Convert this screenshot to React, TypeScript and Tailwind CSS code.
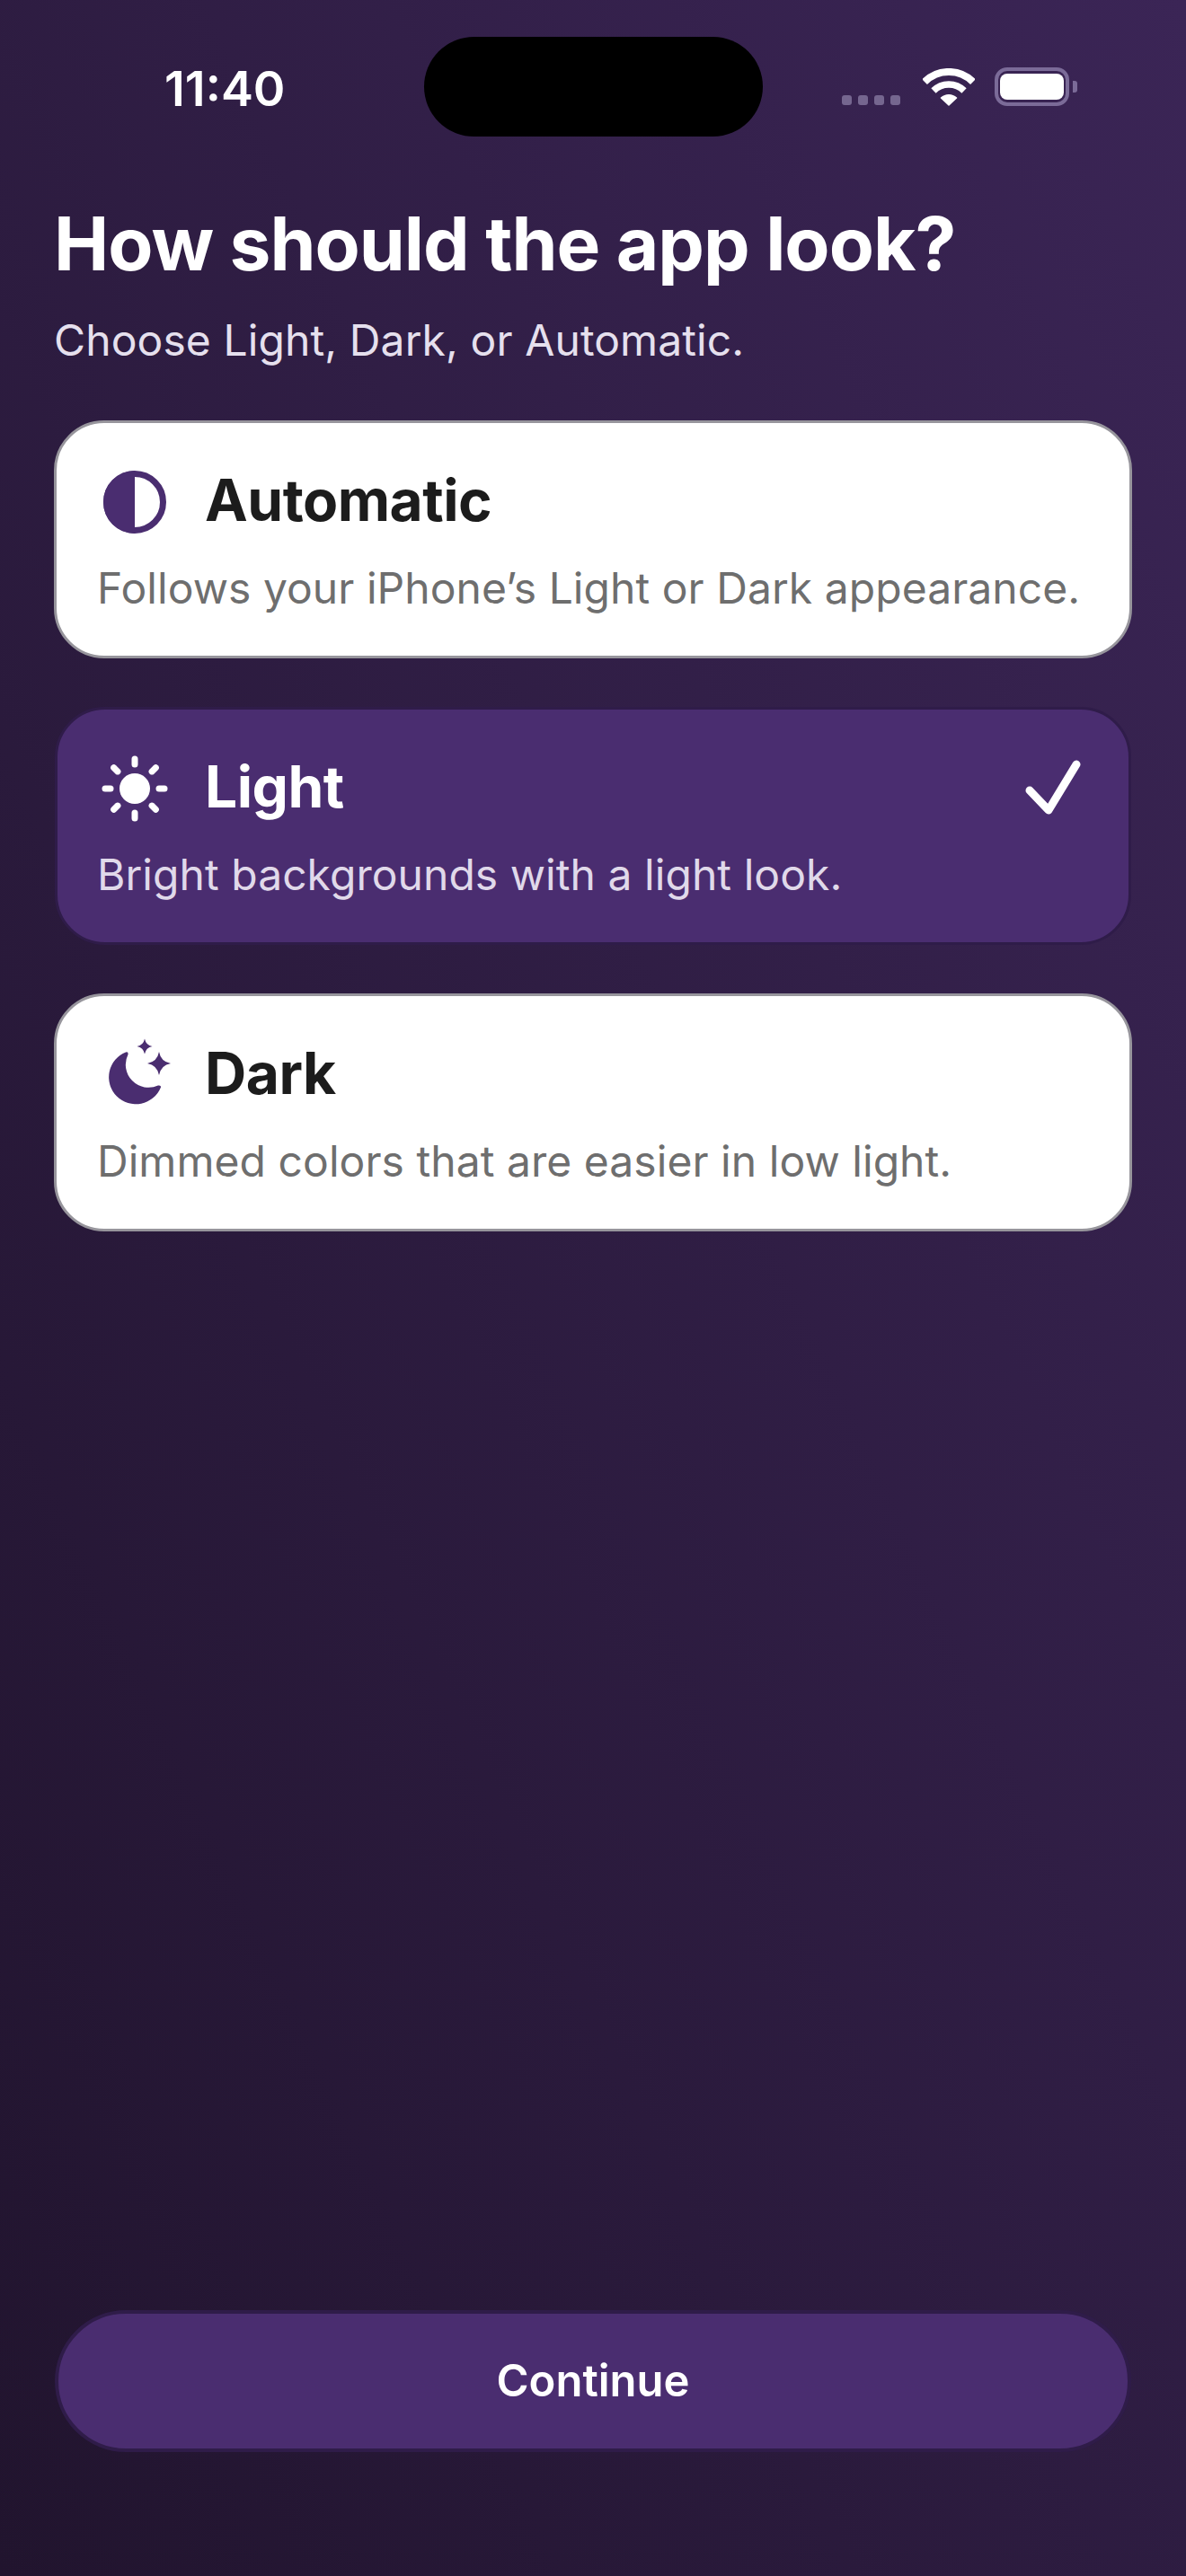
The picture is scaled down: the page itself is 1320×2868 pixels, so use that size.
const font = "font-['Inter',sans-serif]";

function AutoIcon() {
  return (
    <svg className="mt-[3px]" width="84" height="84" viewBox="0 0 84 84" fill="none">
      <circle cx="42" cy="42" r="31.5" stroke="#4a2d70" strokeWidth="7" />
      <path d="M42 7A35 35 0 0 0 42 77Z" fill="#4a2d70" />
    </svg>
  );
}

function SunIcon() {
  const rays = [0, 45, 90, 135, 180, 225, 270, 315];
  return (
    <svg className="mt-[3px]" width="84" height="84" viewBox="0 0 84 84" fill="#fff">
      <circle cx="42" cy="42" r="17" />
      {rays.map((a) => (
        <line
          key={a}
          x1="42"
          y1="15"
          x2="42"
          y2="9"
          stroke="#fff"
          strokeWidth="7"
          strokeLinecap="round"
          transform={`rotate(${a} 42 42)`}
        />
      ))}
    </svg>
  );
}

function MoonIcon() {
  return (
    <svg className="mt-[3px]" width="84" height="84" viewBox="0 0 84 84" fill="#4a2d70">
      <path d="M32 16.5A30 30 0 1 0 71 55.5Q71.5 53 68 53.5A25.5 25.5 0 0 1 34.5 19Q35 15.5 32 16.5Z" />
      <path d="M69 16Q71 27 82 29Q71 31 69 42Q67 31 56 29Q67 27 69 16Z" />
      <path d="M53 1.5Q54.4 8.6 61.5 10Q54.4 11.4 53 18.5Q51.6 11.4 44.5 10Q51.6 8.6 53 1.5Z" />
    </svg>
  );
}

function WifiIcon() {
  return (
    <svg width="58" height="42" viewBox="0 0 58 42" fill="none" stroke="#fff">
      <path d="M2.1 15.1A38 38 0 0 1 55.9 15.1" strokeWidth="8" />
      <path d="M12 25A24 24 0 0 1 46 25" strokeWidth="7.5" />
      <path d="M29 41L20.5 33A12.5 12.5 0 0 1 37.5 33Z" fill="#fff" strokeWidth="1.5" strokeLinejoin="round" />
    </svg>
  );
}

function StatusBar() {
  return (
    <div className="flex pt-[41px]">
      <div className="w-[472px] pl-[183px] pt-[26px] text-[54px] leading-[64px] font-semibold text-white">11:40</div>
      <div className="h-[111px] w-[377px] rounded-[56px] bg-black" />
      <div className="flex flex-1 items-end self-start pl-[88px] pt-[34px]">
        <div className="mr-[25px] flex gap-[7px] pb-[1px]">
          <span className="h-[11px] w-[11px] rounded-[3px] bg-[#75668f]" />
          <span className="h-[11px] w-[11px] rounded-[3px] bg-[#75668f]" />
          <span className="h-[11px] w-[11px] rounded-[3px] bg-[#75668f]" />
          <span className="h-[11px] w-[11px] rounded-[3px] bg-[#75668f]" />
        </div>
        <WifiIcon />
        <div className="ml-[22px] flex items-center">
          <div className="h-[43px] w-[83px] rounded-[14px] border-4 border-[#7b6b98] px-[2px] py-[3px]">
            <div className="h-full rounded-[8px] bg-white" />
          </div>
          <span className="ml-[4px] h-[13px] w-[5px] rounded-r-[3px] bg-[#7b6b98]" />
        </div>
      </div>
    </div>
  );
}

interface OptionCardProps {
  icon: React.ReactNode;
  title: string;
  description: string;
  selected?: boolean;
}

function OptionCard({ icon, title, description, selected }: OptionCardProps) {
  return (
    <div
      className={
        selected
          ? 'mx-px h-[265px] rounded-[56px] border-[3px] border-[#2f1c49] bg-[#4a2d70] pl-[44px] pr-[53px] pt-[44px]'
          : 'h-[265px] rounded-[56px] border-[3px] border-[#97959c] bg-white pl-[45px] pr-[54px] pt-[44px]'
      }
    >
      <div className="flex h-[84px] items-center">
        {icon}
        <span
          className={
            selected
              ? 'ml-[36px] flex-1 text-[64px] leading-[84px] font-bold tracking-[-0.5px] text-white'
              : 'ml-[36px] flex-1 text-[64px] leading-[84px] font-bold tracking-[-0.5px] text-[#1c1c1c]'
          }
        >
          {title}
        </span>
        {selected && (
          <svg width="62" height="62" viewBox="0 0 62 62" fill="none" stroke="#fff" strokeWidth="9" strokeLinecap="round" strokeLinejoin="round">
            <path d="M5 35L26 57L57 6" />
          </svg>
        )}
      </div>
      <p
        className={
          selected
            ? 'mt-[26px] text-[48px] leading-[60px] tracking-[0.05px] whitespace-nowrap text-[#e0d9ea]'
            : 'mt-[26px] text-[48px] leading-[60px] tracking-[0.05px] whitespace-nowrap text-[#6e6e6e]'
        }
      >
        {description}
      </p>
    </div>
  );
}

export default function App() {
  return (
    <div className={`${font} flex h-[2868px] w-[1320px] flex-col overflow-hidden bg-linear-to-bl from-[#3b2556] to-[#21142e]`}>
      <StatusBar />
      <div className="flex flex-1 flex-col px-[60px] pb-[138px]">
        <h1 className="mt-[72px] text-[82px] leading-[96px] font-bold tracking-[-1px] text-white">How should the app look?</h1>
        <p className="mt-[29px] text-[48px] leading-[60px] tracking-[0.1px] text-[#e6e0ee]">Choose Light, Dark, or Automatic.</p>
        <div className="mt-[59px] flex flex-col gap-[54px]">
          <OptionCard icon={<AutoIcon />} title="Automatic" description="Follows your iPhone’s Light or Dark appearance." />
          <OptionCard selected icon={<SunIcon />} title="Light" description="Bright backgrounds with a light look." />
          <OptionCard icon={<MoonIcon />} title="Dark" description="Dimmed colors that are easier in low light." />
        </div>
        <button className="mx-px mt-auto h-[158px] rounded-full border-[4px] border-[#2f1c49] bg-[#4a2d70] text-[49px] font-semibold text-white">
          Continue
        </button>
      </div>
    </div>
  );
}
